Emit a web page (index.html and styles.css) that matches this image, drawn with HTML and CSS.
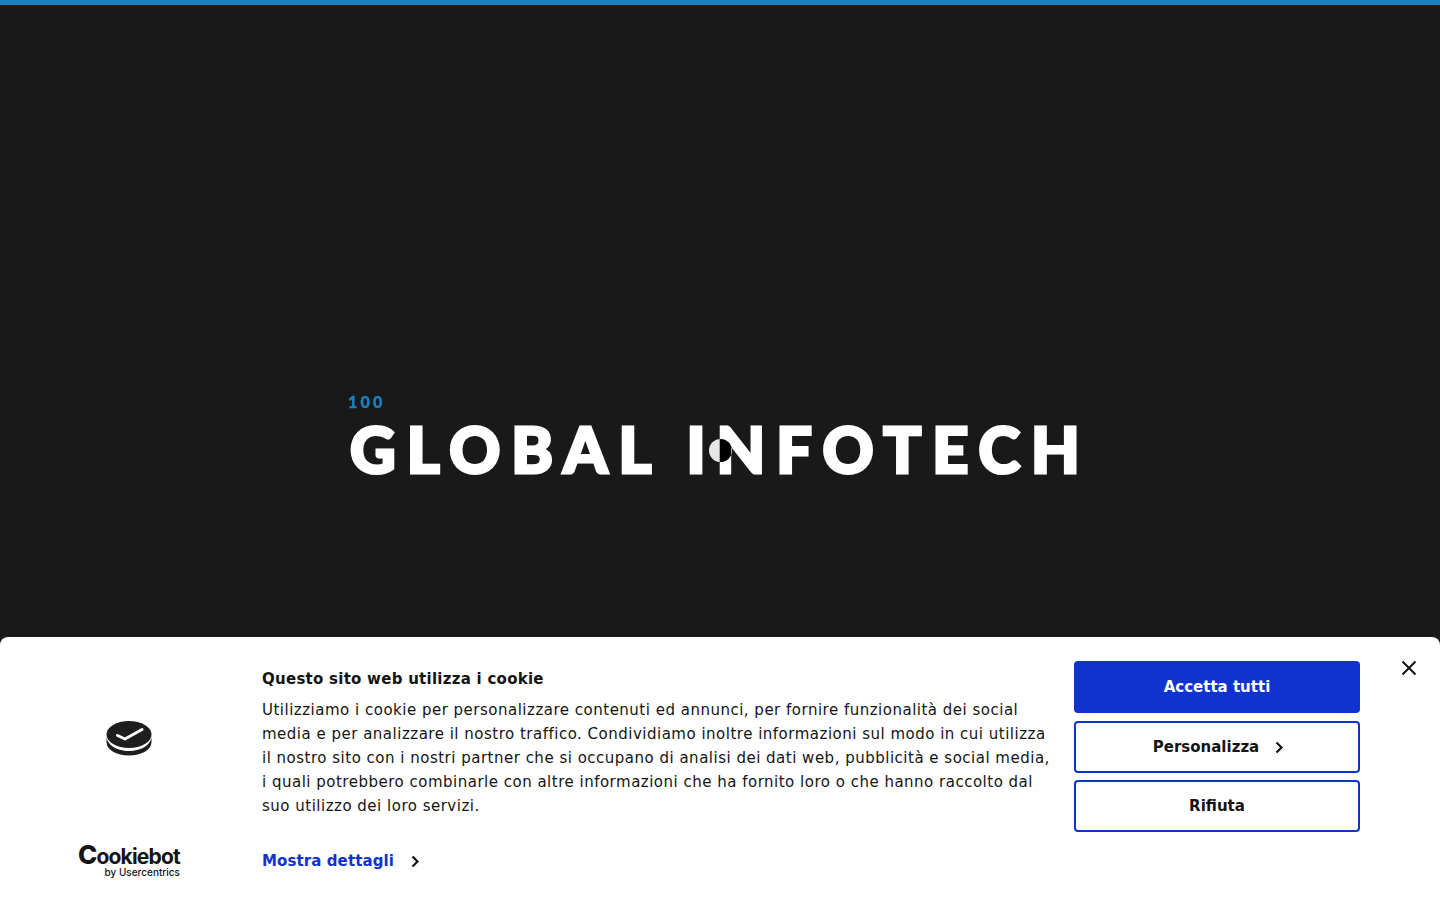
FILE: index.html
```html
<!DOCTYPE html>
<html lang="it">
<head>
  <meta charset="utf-8">
  <title>Global Infotech</title>
  <link rel="stylesheet" href="styles.css">
</head>
<body>

  <div class="top-bar"></div>

  <main class="hero">
    <div class="hero-count">100</div>
    <h1 class="hero-title">GLOBAL INFOTECH</h1>
  </main>

  <div class="cursor-dot"></div>

  <section class="cookie-banner">
    <div class="cookie-brand">
      <svg class="brand-icon" width="46" height="36" viewBox="0 0 46 36">
        <path class="brand-lower" d="M0.500 16v6C0.500 30 10.500 35.500 23 35.500S45.500 30 45.500 22v-6C45.500 24.500 35.500 31 23 31S0.500 24.500 0.500 16z"/>
        <ellipse class="brand-lower" cx="23" cy="14.500" rx="22.500" ry="13.500"/>
        <path class="brand-check" d="M11.500 15.500l7.500 3.500L36 9.500" />
      </svg>
      <div class="brand-word">
        <span class="brand-name"><span class="brand-c">C</span>ookiebot</span>
        <span class="brand-by">by Usercentrics</span>
      </div>
    </div>

    <div class="cookie-text">
      <h2 class="cookie-title">Questo sito web utilizza i cookie</h2>
      <p class="cookie-body">Utilizziamo i cookie per personalizzare contenuti ed annunci, per fornire funzionalità dei social media e per analizzare il nostro traffico. Condividiamo inoltre informazioni sul modo in cui utilizza il nostro sito con i nostri partner che si occupano di analisi dei dati web, pubblicità e social media, i quali potrebbero combinarle con altre informazioni che ha fornito loro o che hanno raccolto dal suo utilizzo dei loro servizi.</p>
      <a class="cookie-details" href="#">Mostra dettagli
        <svg class="chevron" width="9" height="13" viewBox="0 0 9 13"><path d="M1.500 1.500L6.500 6.500l-5 5"/></svg>
      </a>
    </div>

    <div class="cookie-actions">
      <button class="btn btn-primary">Accetta tutti</button>
      <button class="btn">Personalizza
        <svg class="chevron" width="9" height="13" viewBox="0 0 9 13"><path d="M1.500 1.500L6.500 6.500l-5 5"/></svg>
      </button>
      <button class="btn">Rifiuta</button>
    </div>

    <button class="cookie-close" aria-label="Chiudi">
      <svg width="16" height="16" viewBox="0 0 16 16"><path d="M1.500 1.500l13 13M14.500 1.500l-13 13"/></svg>
    </button>
  </section>

</body>
</html>
```

FILE: styles.css
```css
html, body {
  margin: 0;
  height: 100%;
  overflow: hidden;
}

body {
  background: #191919;
  font-family: "DejaVu Sans", sans-serif;
  color: #141414;
}

.top-bar {
  height: 5px;
  background: #1c7fbf;
}

.hero {
  padding: 388px 0 0 348px;
}

.hero-count {
  font: 900 16px/18px "Lato", sans-serif;
  letter-spacing: 3.200px;
  -webkit-text-stroke: .4px #1c7fbf;
  color: #1c7fbf;
}

.hero-title {
  margin: 2px 0 0 2px;
  font: 900 63px/72px "Lato", sans-serif;
  letter-spacing: 11px;
  -webkit-text-stroke: 3px #fff;
  color: #fff;
  white-space: nowrap;
}

.cursor-dot {
  position: absolute;
  left: 709px;
  top: 439px;
  width: 23px;
  height: 23px;
  border-radius: 50%;
  background: #fff;
  mix-blend-mode: difference;
}

.cookie-banner {
  position: fixed;
  left: 0;
  right: 0;
  bottom: 0;
  height: 263px;
  box-sizing: border-box;
  display: grid;
  grid-template-columns: 258px 4px 788px 24px 286px;
  padding: 24px 0 0;
  background: #fff;
  border-radius: 8px 8px 0 0;
}

.cookie-brand {
  display: flex;
  flex-direction: column;
  align-items: center;
  padding-top: 59px;
}

.brand-icon {
  display: block;
}

.brand-lower {
  fill: #1e1e1e;
}

.brand-check {
  fill: none;
  stroke: #fff;
  stroke-width: 3;
  stroke-linecap: round;
  stroke-linejoin: round;
}

.brand-word {
  margin-top: 89px;
  width: 102px;
  display: flex;
  flex-direction: column;
  align-items: flex-end;
  color: #141414;
  font-family: "Inter", sans-serif;
}

.brand-name {
  font-size: 21px;
  line-height: 20px;
  font-weight: 700;
  letter-spacing: -.8px;
}

.brand-c {
  font-size: 26px;
  line-height: 20px;
  font-weight: 800;
}

.brand-by {
  font-size: 10px;
  line-height: 10px;
  font-weight: 500;
}

.cookie-text {
  grid-column: 3;
}

.cookie-title {
  margin: 8px 0 0;
  font-size: 15px;
  line-height: 20px;
  font-weight: 700;
  letter-spacing: .26px;
}

.cookie-body {
  margin: 9px 0 0;
  font-size: 15px;
  line-height: 24px;
  letter-spacing: .5px;
}

.cookie-details {
  display: inline-flex;
  align-items: center;
  gap: 17px;
  margin-top: 31px;
  font-size: 15px;
  line-height: 24px;
  font-weight: 700;
  letter-spacing: .1px;
  color: #1032cf;
  text-decoration: none;
}

.chevron {
  fill: none;
  stroke: #141414;
  stroke-width: 2.200;
}

.cookie-actions {
  grid-column: 5;
  display: flex;
  flex-direction: column;
  gap: 7.600px;
}

.btn {
  height: 52px;
  box-sizing: border-box;
  display: flex;
  align-items: center;
  justify-content: center;
  gap: 16px;
  border: 2px solid #1032cf;
  border-radius: 4px;
  background: #fff;
  color: #141414;
  font: 700 15px/20px "DejaVu Sans", sans-serif;
}

.btn .chevron {
  margin: 2px -3px 0 0;
}

.btn-primary {
  background: #1032cf;
  color: #fff;
}

.cookie-close {
  position: absolute;
  top: 23px;
  right: 23px;
  width: 16px;
  height: 16px;
  padding: 0;
  border: 0;
  background: none;
}

.cookie-close svg {
  display: block;
  fill: none;
  stroke: #141414;
  stroke-width: 2;
}
```
